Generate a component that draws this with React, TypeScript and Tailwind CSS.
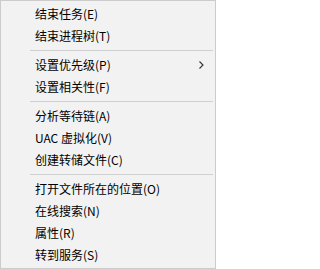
import React from 'react';

type Entry = { label: string; sub?: boolean } | 'sep';

const entries: Entry[] = [
  { label: '结束任务(E)' },
  { label: '结束进程树(T)' },
  'sep',
  { label: '设置优先级(P)', sub: true },
  { label: '设置相关性(F)' },
  'sep',
  { label: '分析等待链(A)' },
  { label: 'UAC 虚拟化(V)' },
  { label: '创建转储文件(C)' },
  'sep',
  { label: '打开文件所在的位置(O)' },
  { label: '在线搜索(N)' },
  { label: '属性(R)' },
  { label: '转到服务(S)' },
];

const Chevron = () => (
  <svg width="5" height="8" viewBox="0 0 5 8" className="absolute right-[11px] top-[7px]">
    <path d="M0.5 0.5 L4 4 L0.5 7.5" fill="none" stroke="#333" strokeWidth="1.1" />
  </svg>
);

export default function App() {
  return (
    <div className="w-[216px] h-[269px] bg-[#f2f2f2] border border-[#cccccc] py-[2px] text-[12px] text-black font-['Noto_Sans_CJK_SC','Noto_Sans',sans-serif]">
      {entries.map((e, i) =>
        e === 'sep' ? (
          <div key={i} className="h-[7px] flex items-center pl-[29px] pr-[2px]">
            <div className="h-px w-full bg-[#d0d0d0]" />
          </div>
        ) : (
          <div key={i} className="relative h-[22px] flex items-center pl-[34px] leading-none">
            <span>{e.label}</span>
            {e.sub && <Chevron />}
          </div>
        )
      )}
    </div>
  );
}
